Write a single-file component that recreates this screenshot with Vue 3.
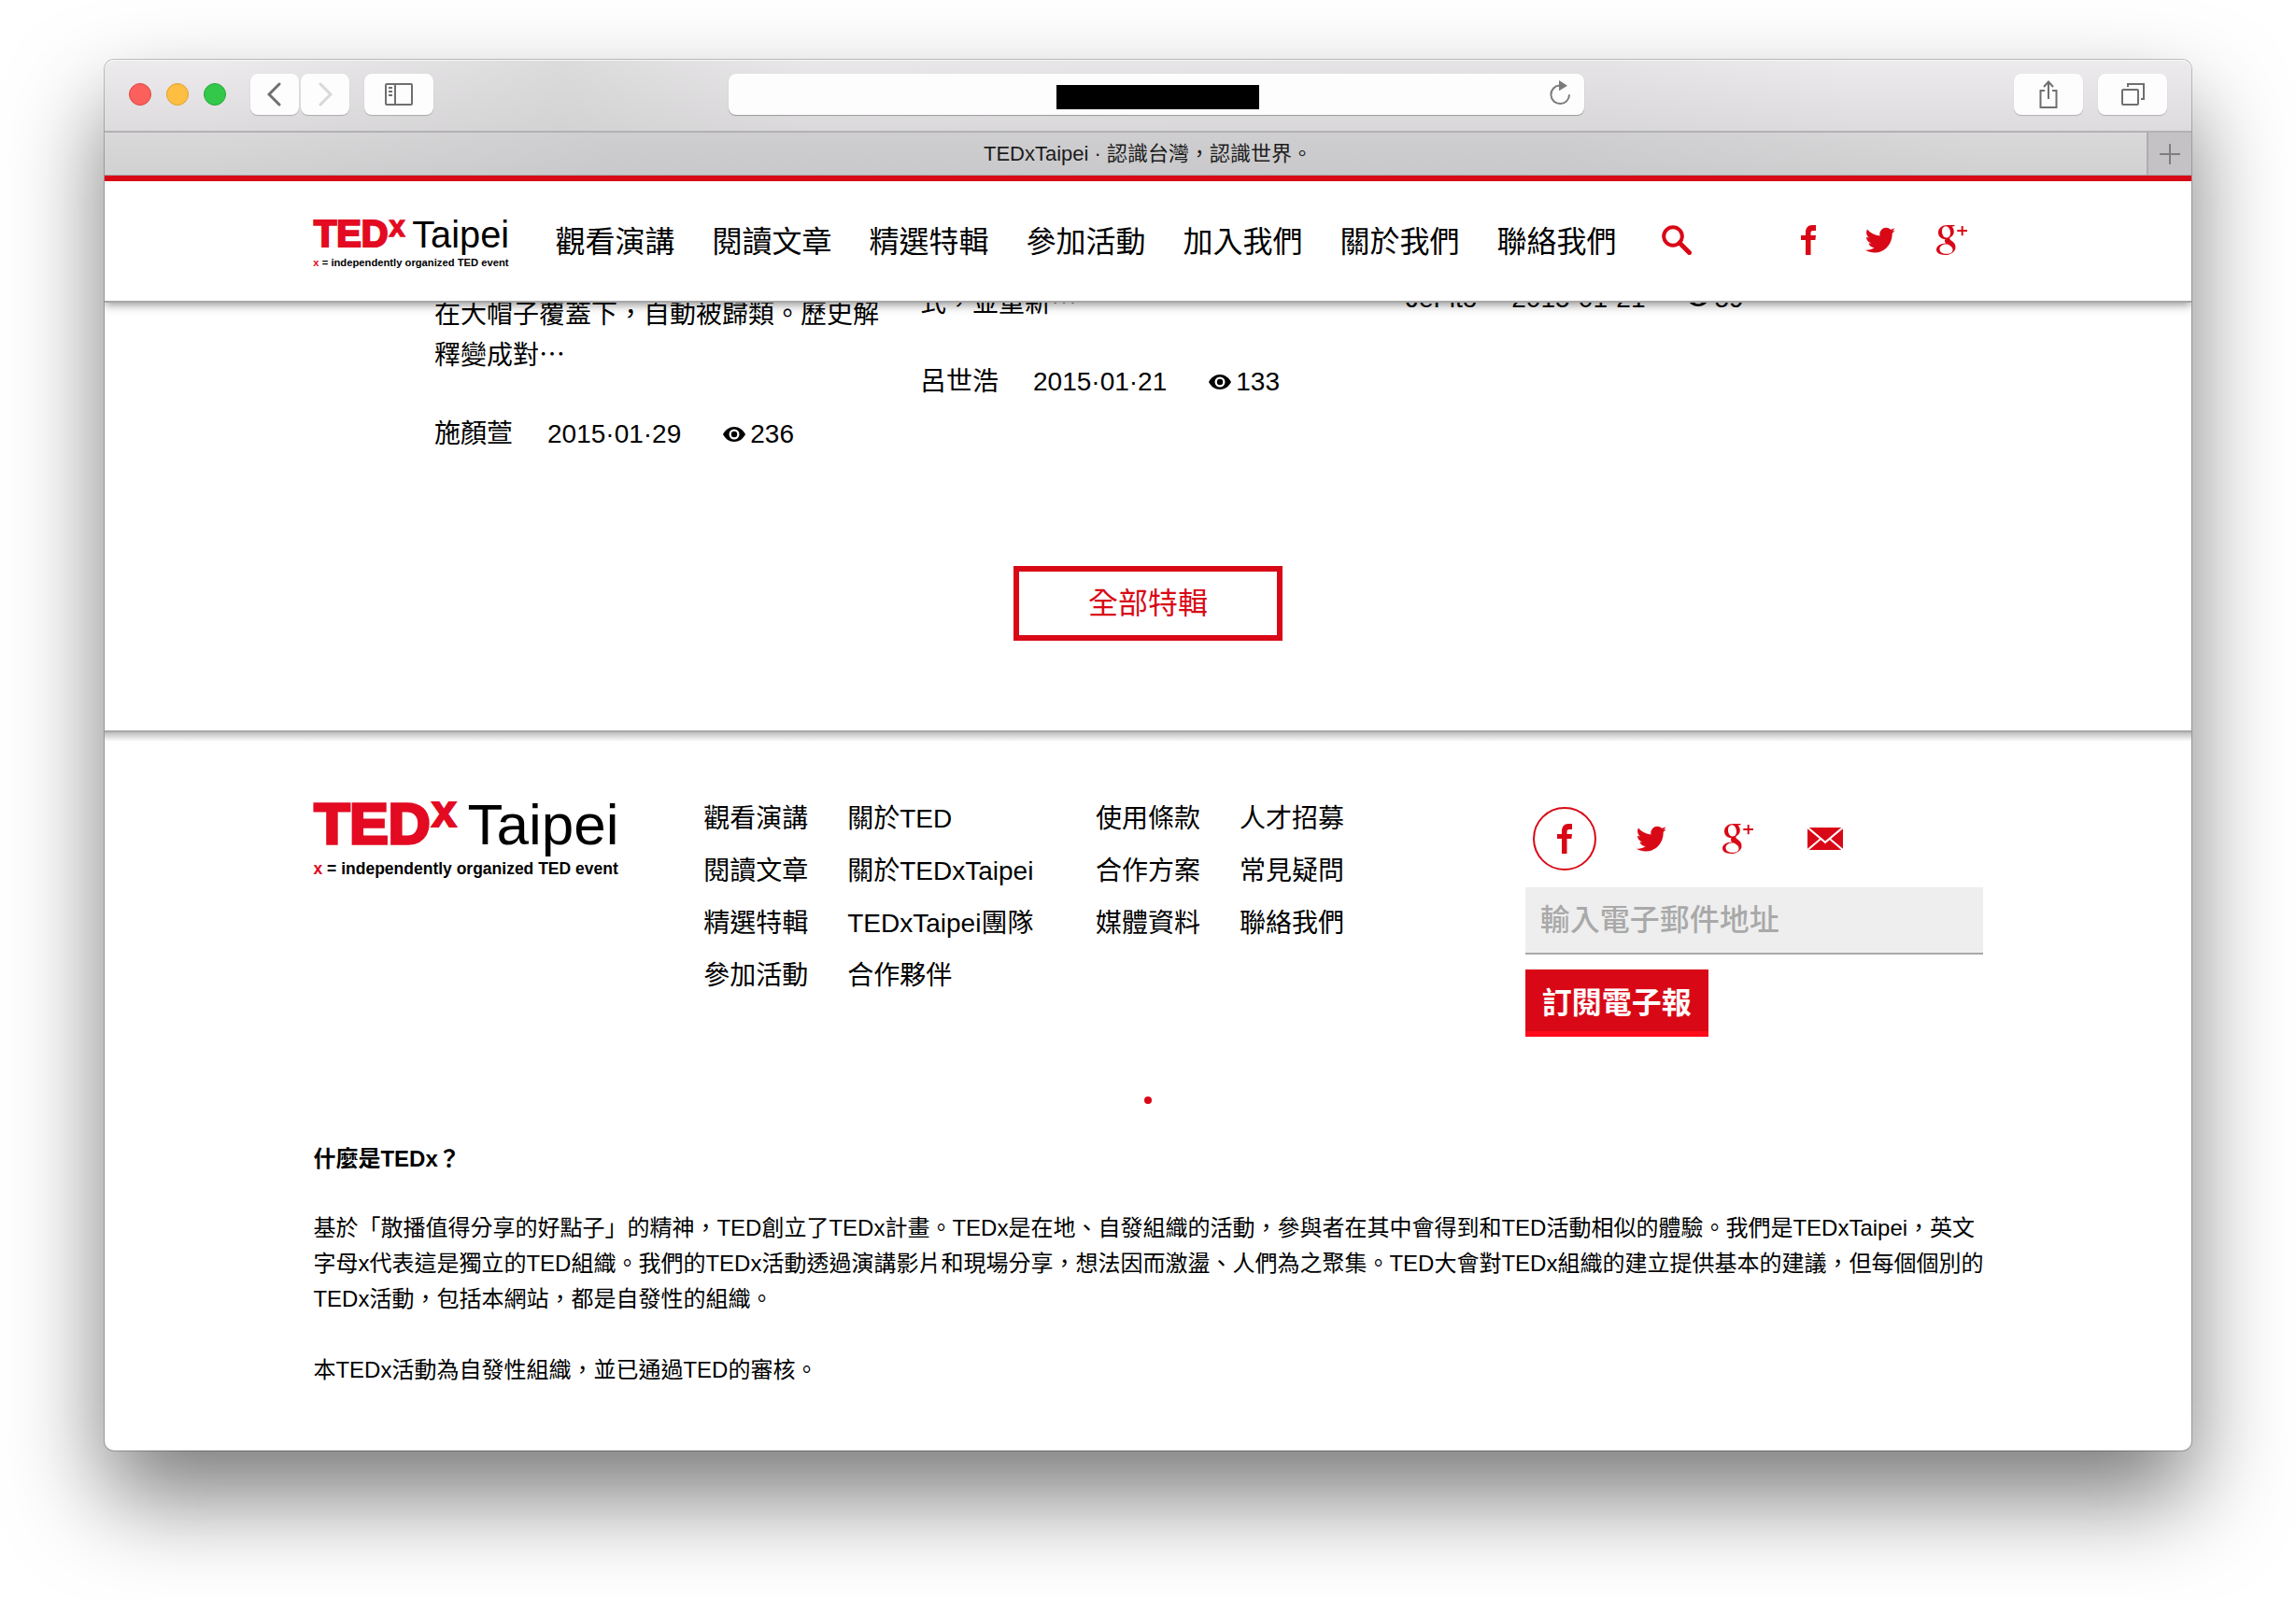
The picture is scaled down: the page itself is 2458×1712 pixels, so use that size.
<script setup>
import { h } from 'vue'

const navItems = ['觀看演講', '閱讀文章', '精選特輯', '參加活動', '加入我們', '關於我們', '聯絡我們']

const linkGroups = [
  [
    ['觀看演講', '閱讀文章', '精選特輯', '參加活動'],
    ['關於TED', '關於TEDxTaipei', 'TEDxTaipei團隊', '合作夥伴'],
  ],
  [
    ['使用條款', '合作方案', '媒體資料'],
    ['人才招募', '常見疑問', '聯絡我們'],
  ],
]

const articles = [
  { key: 'a', text: '在大帽子覆蓋下，自動被歸類。歷史解釋變成對⋯', author: '施顏萱', date: '2015·01·29', views: 236 },
  { key: 'b', text: '式，並重新⋯', author: '呂世浩', date: '2015·01·21', views: 133 },
  { key: 'c', text: '', author: 'JeFito', date: '2015·01·21', views: 59 },
]

const iconPaths = {
  facebook: { box: '0 0 16 32', d: 'M16 0v6h-3c-2 0-2.500 1-2.500 2.500V11H16l-.6 5h-4.900v16H5V16H0v-5h5V8C5 3 7.500 0 12 0z' },
  twitter: { box: '0 0 32 28', d: 'M32 3.300a13 13 0 0 1-3.300 3.500C29 18 21 27.500 10 27.500c-3.600 0-7-1-10-2.800 3.600.4 7-.6 9.500-2.700-2.900-.1-5.300-2-6.100-4.600 1 .2 2 .1 2.900-.1C3.200 16.500 1 14 1 10.700c.9.500 1.900.8 3 .8C1.100 9.400.2 5.600 2 2.600c3.300 4 8 6.500 13.500 6.800C14.500 5 17.800.7 22.200.7c1.900 0 3.600.8 4.800 2.100 1.500-.3 2.900-.8 4.200-1.600-.5 1.500-1.500 2.800-2.900 3.600 1.300-.2 2.600-.5 3.700-1.500z' },
  google: { box: '0 0 34 32', d: 'M20 0H11.500C6 0 2 3.500 2 8c0 4 3 7 7.500 7.200-1 1.800-.5 3.300.8 4.300C4 19.700 0 22.500 0 26.300 0 29.800 3.700 32 9 32c7 0 11.500-3.800 11.500-8.300 0-3-1.500-4.800-4.200-6.900-2-1.500-2.600-2.300-1.500-3.600 2.500-1.500 4-3.500 4-6.300 0-2.300-1-4-2.500-5.300h2.200zM10 1.300c3 0 5 3.400 5 7 0 3.300-1.600 5.300-4.200 5.300C7.800 13.600 6 10.300 6 6.600c0-3.200 1.500-5.300 4-5.300zM10.500 20.500c1.200 0 1.800.1 2.600.6 2.800 2 4.400 3 4.400 5.300 0 2.600-2.500 4.300-6.500 4.300-4.500 0-7.500-2-7.500-5 0-3.200 3-5.200 7-5.200zM26.700 1h2v4H33v2h-4.300v4.300h-2V7h-4.400V5h4.400z' },
  mail: { box: '0 0 38 24', d: 'M1.800 0h34.400L19 14.500zM0 1.200 12.800 12 0 22.800zM38 1.200v21.600L25.200 12zM14.200 13.200 19 17.200l4.800-4L36.200 24H1.800z' },
}

function Icon({ name }) {
  const icon = iconPaths[name]
  return h('svg', { viewBox: icon.box, class: name, 'aria-hidden': 'true' }, [
    h('path', { d: icon.d, fill: 'currentColor', 'fill-rule': 'evenodd' }),
  ])
}

function Logo() {
  return h('svg', { viewBox: '0 0 648 160', role: 'img', 'aria-label': 'TEDxTaipei' }, [
    h('text', { x: 3, y: 87, class: 'ted' }, 'TED'),
    h('text', { x: 254, y: 52, class: 'sup' }, 'x'),
    h('text', { x: 331, y: 89, class: 'city' }, 'Taipei'),
    h('text', { x: 1, y: 154, class: 'tagline' }, [
      h('tspan', { class: 'red' }, 'x'),
      ' = independently organized TED event',
    ]),
  ])
}
</script>

<template>
  <div class="desktop">
    <div class="window">
      <div class="toolbar">
        <div class="tools">
          <div class="lights">
            <span class="light close"></span>
            <span class="light minimise"></span>
            <span class="light zoom"></span>
          </div>
          <div class="history">
            <button class="tool back" aria-label="上一頁">
              <svg width="16" height="26" viewBox="0 0 16 26"><path d="M13 2 2 13l11 11" /></svg>
            </button>
            <button class="tool forward" aria-label="下一頁">
              <svg width="16" height="26" viewBox="0 0 16 26"><path d="M3 2l11 11L3 24" /></svg>
            </button>
          </div>
          <button class="tool wide" aria-label="側邊欄">
            <svg class="thin" width="30" height="24" viewBox="0 0 30 24">
              <rect x="1" y="1" width="28" height="22" rx="1" />
              <path d="M11 1v22M4 5h4M4 9h4M4 13h4" />
            </svg>
          </button>
        </div>
        <div class="address">
          <input type="text" aria-label="網址" />
          <span class="redacted"></span>
          <button class="reload" aria-label="重新載入">
            <svg width="24" height="28" viewBox="0 0 24 28">
              <path d="M11.500 5.500A9.800 9.800 0 1 0 22 15.200" fill="none" stroke="#7b7b7b" stroke-width="2" />
              <path d="M11 0l9 5.700-9 5.500z" fill="#7b7b7b" />
            </svg>
          </button>
        </div>
        <div class="tools end">
          <button class="tool wide" aria-label="分享">
            <svg class="thin" width="22" height="32" viewBox="0 0 22 32">
              <path d="M7 12H2.500v18h17V12H15M11 21V3M6 8l5-5.500L16 8" />
            </svg>
          </button>
          <button class="tool wide" aria-label="標籤頁">
            <svg class="thin" width="25" height="24" viewBox="0 0 25 24">
              <rect x="1" y="7" width="17" height="16" rx="1" />
              <path d="M7 4V1h17v16h-3" />
            </svg>
          </button>
        </div>
      </div>

      <div class="tabs">
        <div class="tab">TEDxTaipei · 認識台灣，認識世界。</div>
        <button class="new-tab" aria-label="新增標籤頁">
          <svg width="22" height="22" viewBox="0 0 22 22"><path d="M11 0v22M0 11h22" stroke="#7f7d80" stroke-width="2" /></svg>
        </button>
      </div>

      <header class="site-header">
        <div class="container bar">
          <a href="#" class="logo small"><Logo /></a>
          <nav class="nav">
            <a v-for="item in navItems" :key="item" href="#">{{ item }}</a>
          </nav>
          <button class="search" aria-label="搜尋">
            <svg width="32" height="32" viewBox="0 0 32 32" fill="none" stroke="currentColor">
              <circle cx="12" cy="12" r="9.800" stroke-width="4" />
              <path d="M19 19l10.500 10.500" stroke-width="5" stroke-linecap="round" />
            </svg>
          </button>
          <div class="header-social">
            <a v-for="name in ['facebook', 'twitter', 'google']" :key="name" href="#" :aria-label="name"><Icon :name="name" /></a>
          </div>
        </div>
      </header>

      <section class="features">
        <div class="articles">
          <article v-for="item in articles" :key="item.key" :class="['article', item.key]">
            <p v-if="item.text">{{ item.text }}</p>
            <div class="meta">
              <span>{{ item.author }}</span>
              <span>{{ item.date }}</span>
              <span class="views">
                <svg width="24" height="16" viewBox="0 0 24 16">
                  <path fill-rule="evenodd" d="M12 0c5 0 9.500 3 12 8-2.500 5-7 8-12 8S2.500 13 0 8C2.500 3 7 0 12 0zM12 2.500a5.500 5.500 0 1 0 0 11 5.500 5.500 0 0 0 0-11z" />
                  <circle cx="12" cy="8" r="3.200" />
                </svg>
                {{ item.views }}
              </span>
            </div>
          </article>
        </div>
        <a href="#" class="all">全部特輯</a>
      </section>

      <footer class="footer">
        <div class="container">
          <div class="columns">
            <a href="#" class="logo large"><Logo /></a>
            <div v-for="(group, g) in linkGroups" :key="g" class="group">
              <ul v-for="(list, l) in group" :key="l">
                <li v-for="link in list" :key="link"><a href="#">{{ link }}</a></li>
              </ul>
            </div>
            <form class="subscribe" @submit.prevent>
              <div class="social">
                <a href="#" class="active" aria-label="facebook"><Icon name="facebook" /></a>
                <a href="#" aria-label="twitter"><Icon name="twitter" /></a>
                <a href="#" aria-label="google"><Icon name="google" /></a>
                <a href="#" aria-label="mail"><Icon name="mail" /></a>
              </div>
              <input type="email" placeholder="輸入電子郵件地址" aria-label="輸入電子郵件地址" />
              <button type="submit">訂閱電子報</button>
            </form>
          </div>
          <div class="dot"></div>
          <div class="about">
            <h2>什麼是TEDx？</h2>
            <p>基於「散播值得分享的好點子」的精神，TED創立了TEDx計畫。TEDx是在地、自發組織的活動，參與者在其中會得到和TED活動相似的體驗。我們是TEDxTaipei，英文字母x代表這是獨立的TED組織。我們的TEDx活動透過演講影片和現場分享，想法因而激盪、人們為之聚集。TED大會對TEDx組織的建立提供基本的建議，但每個個別的TEDx活動，包括本網站，都是自發性的組織。</p>
            <p>本TEDx活動為自發性組織，並已通過TED的審核。</p>
          </div>
        </div>
      </footer>
    </div>
  </div>
</template>

<style>
body {
  background: #fff;
}
</style>

<style scoped>
* {
  box-sizing: border-box;
}

.desktop {
  --red: #d90816;
  padding: 64px 112px 160px;
  font-family: "Liberation Sans", "Noto Sans CJK TC", sans-serif;
  color: #000;
  overflow: hidden;
}

a {
  color: inherit;
  text-decoration: none;
}

button,
input {
  font: inherit;
  border: 0;
  margin: 0;
  padding: 0;
}

svg {
  display: block;
}

.window {
  border-radius: 10px;
  background: #fff;
  box-shadow: 0 0 0 1px rgba(0, 0, 0, 0.22), 0 50px 100px rgba(0, 0, 0, 0.52);
}

/* Browser chrome */
.toolbar {
  display: grid;
  grid-template-columns: 642fr 916fr 624fr;
  align-items: center;
  height: 78px;
  padding: 0 26px 2px;
  border-radius: 10px 10px 0 0;
  border-bottom: 2px solid #b3b1b3;
  background:
    linear-gradient(90deg, rgba(200, 200, 200, 0) 5%, rgba(200, 200, 200, 0.45) 22%, rgba(200, 200, 200, 0.1) 34%, rgba(200, 200, 200, 0.2) 60%, rgba(200, 200, 200, 0.2) 72%, rgba(200, 200, 200, 0) 84%),
    linear-gradient(#edebed, #dddbdd);
  box-shadow: inset 0 1px 0 #f7f7f7;
}

.tools,
.lights,
.history {
  display: flex;
  align-items: center;
}

.tools {
  gap: 16px;
}

.tools.end {
  justify-content: flex-end;
}

.lights {
  gap: 16px;
  margin-right: 10px;
}

.history {
  gap: 2px;
}

.light {
  width: 24px;
  height: 24px;
  border-radius: 50%;
}

.close {
  background: #fc605c;
  border: 1px solid #e0443f;
}

.minimise {
  background: #fdbe41;
  border: 1px solid #e0a033;
}

.zoom {
  background: #34c84a;
  border: 1px solid #24aa38;
}

.tool {
  display: flex;
  align-items: center;
  justify-content: center;
  width: 52px;
  height: 44px;
  border-radius: 8px;
  background: #fdfdfd;
  box-shadow: 0 1px 1px rgba(0, 0, 0, 0.22);
}

.tool.wide {
  width: 74px;
}

.tool svg {
  fill: none;
  stroke: #6f6f6f;
  stroke-width: 3;
  stroke-linecap: round;
}

.tool .thin {
  stroke-width: 2;
  stroke-linecap: butt;
}

.forward svg {
  stroke: #d8d8d8;
}

.address {
  position: relative;
  height: 44px;
}

.address input {
  display: block;
  width: 100%;
  height: 44px;
  border-radius: 8px;
  background: #fdfdfd;
  box-shadow: 0 1px 1px rgba(0, 0, 0, 0.3);
}

.redacted {
  position: absolute;
  top: 12px;
  left: calc(50% - 107px);
  width: 217px;
  height: 26px;
  background: #000;
}

.reload {
  position: absolute;
  top: 7px;
  right: 14px;
  background: none;
}

.tabs {
  display: flex;
  height: 46px;
  border-bottom: 1px solid #a9a9ab;
  background:
    linear-gradient(90deg, rgba(180, 180, 184, 0) 5%, rgba(180, 180, 184, 0.3) 24%, rgba(180, 180, 184, 0.3) 70%, rgba(180, 180, 184, 0) 90%),
    linear-gradient(#dad9da, #d2d1d2);
}

.tab {
  flex: 1;
  padding-left: 48px;
  text-align: center;
  font-size: 22px;
  line-height: 46px;
  color: #1c1c1c;
}

.new-tab {
  display: flex;
  align-items: center;
  justify-content: center;
  width: 48px;
  border-left: 2px solid #aeacaf;
  background: #c4c2c5;
}

/* Site header */
.container {
  width: 80%;
  margin: 0 auto;
}

.site-header {
  position: relative;
  z-index: 1;
  border-top: 6px solid var(--red);
  border-bottom: 2px solid #a8a8a8;
  background: #fff;
  box-shadow: 0 2px 10px rgba(0, 0, 0, 0.45);
  clip-path: inset(0 0 -16px 0);
}

.bar {
  display: flex;
  align-items: center;
  height: 128px;
}

.logo {
  color: #000;
}

.logo svg {
  width: 100%;
  overflow: visible;
}

.logo.small {
  width: 208px;
  margin: 8px 51px 0 0;
}

.logo.large {
  width: 324px;
  margin-top: 10px;
}

.logo :deep(.ted) {
  font-size: 124px;
  font-weight: bold;
  fill: #e30a22;
  stroke: #e30a22;
  stroke-width: 7px;
}

.logo :deep(.sup) {
  font-size: 96px;
  font-weight: bold;
  fill: #e30a22;
  stroke: #e30a22;
  stroke-width: 4px;
}

.logo :deep(.city) {
  font-size: 124px;
}

.logo :deep(.tagline) {
  font-size: 35px;
  font-weight: bold;
}

.logo :deep(.red) {
  fill: #e30a22;
}

.nav {
  display: flex;
  gap: 40px;
  padding-top: 2px;
  font-size: 32px;
  line-height: 48px;
  white-space: nowrap;
}

.search {
  margin: 0 0 2px 48px;
  background: none;
  color: var(--red);
}

.header-social {
  display: flex;
  gap: 43px;
  margin: 0 16px 2px auto;
  color: var(--red);
}

.header-social a {
  display: flex;
  align-items: center;
  justify-content: center;
  width: 34px;
  height: 32px;
}

.facebook {
  width: 16px;
}

.twitter {
  width: 32px;
}

.google {
  width: 34px;
}

.mail {
  width: 38px;
}

/* Features */
.features {
  display: flex;
  flex-direction: column;
  align-items: center;
  padding-bottom: 96px;
  border-bottom: 2px solid #a8a8a8;
  font-size: 28px;
  line-height: 44px;
}

.articles {
  display: grid;
  grid-template-columns: repeat(3, 1fr);
  gap: 32px;
  width: 1528px;
  max-width: 100%;
  margin-bottom: 119px;
}

.article.a {
  margin-top: -9px;
}

.article.b {
  margin-top: -21px;
}

.article.c {
  margin-top: -26px;
}

.article p {
  margin: 0 0 40px;
}

.meta,
.views {
  display: flex;
  align-items: center;
}

.meta {
  gap: 37px;
}

.views {
  gap: 5px;
  margin-left: 8px;
}

.all {
  width: 288px;
  border: 6px solid var(--red);
  color: var(--red);
  font-size: 32px;
  line-height: 68px;
  text-align: center;
}

/* Footer */
.footer {
  padding: 65px 0 67px;
  border-radius: 0 0 10px 10px;
  background: linear-gradient(rgba(0, 0, 0, 0.26), rgba(0, 0, 0, 0)) top / 100% 10px no-repeat;
}

.columns {
  display: grid;
  grid-template-columns: 418fr 420fr 460fr 490fr;
  align-items: start;
}

.group {
  display: flex;
  gap: 42px;
  font-size: 28px;
  line-height: 56px;
  white-space: nowrap;
}

ul {
  margin: 0;
  padding: 0;
  list-style: none;
}

.subscribe {
  display: flex;
  flex-direction: column;
  align-items: flex-start;
  padding-top: 15px;
}

.social {
  display: flex;
  gap: 25px;
  margin: 0 0 18px 8px;
  color: var(--red);
}

.social a {
  display: flex;
  align-items: center;
  justify-content: center;
  width: 68px;
  height: 68px;
  border-radius: 50%;
}

.social .active {
  border: 2px solid var(--red);
}

.subscribe input {
  width: 100%;
  height: 72px;
  margin-bottom: 16px;
  padding: 0 16px;
  border-bottom: 2px solid #a9a9a9;
  background: #eee;
  font-size: 32px;
  font-weight: 500;
}

.subscribe input::placeholder {
  color: #a9a9a9;
  opacity: 1;
}

.subscribe button {
  height: 72px;
  padding: 0 18px 6px;
  background: var(--red);
  box-shadow: inset 0 -6px 0 #ff0a1b;
  color: #fff;
  font-size: 32px;
  font-weight: bold;
}

.dot {
  width: 8px;
  height: 8px;
  margin: 64px auto 40px;
  border-radius: 50%;
  background: var(--red);
}

.about {
  margin-right: -6px;
  font-size: 24px;
  line-height: 38px;
}

.about h2 {
  margin: 0 0 36px;
  font-size: 24px;
}

.about p {
  margin: 0 0 38px;
}

.about p:last-child {
  margin: 0;
}
</style>
